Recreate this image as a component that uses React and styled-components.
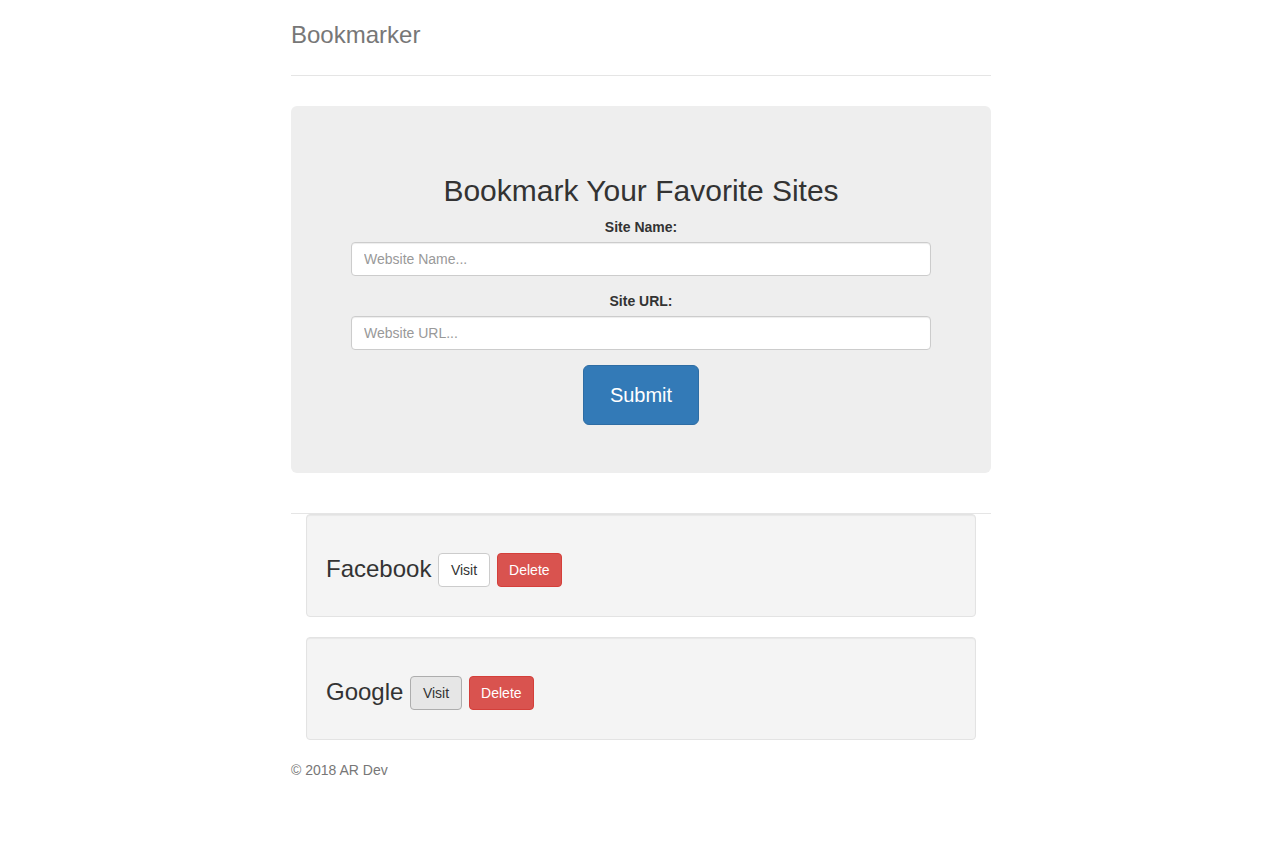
import React from 'react'
import styled, { createGlobalStyle } from 'styled-components'

const GlobalStyle = createGlobalStyle`
  body {
    margin: 0;
    background: #fff;
    font-family: "Liberation Sans", Arial, sans-serif;
    font-size: 14px;
    line-height: 1.42857;
    color: #333;
  }
  * { box-sizing: border-box; }
`

const bookmarks = [
    { name: 'Facebook', active: false },
    { name: 'Google', active: true },
]

export default function App() {
    return (
        <>
            <GlobalStyle />
            <Container>
                <Header>
                    <Brand>Bookmarker</Brand>
                </Header>
                <Jumbotron>
                    <Title>Bookmark Your Favorite Sites</Title>
                    <form onSubmit={e => e.preventDefault()}>
                        <FormGroup>
                            <Label>Site Name:</Label>
                            <Input type="text" placeholder="Website Name..." />
                        </FormGroup>
                        <FormGroup>
                            <Label>Site URL:</Label>
                            <Input type="text" placeholder="Website URL..." />
                        </FormGroup>
                        <SubmitButton type="submit">Submit</SubmitButton>
                    </form>
                </Jumbotron>
                <Results>
                    {bookmarks.map(b => (
                        <Well key={b.name}>
                            <SiteName>{b.name}</SiteName>
                            <Button active={b.active}>Visit</Button>
                            <Button variant="danger">Delete</Button>
                        </Well>
                    ))}
                </Results>
                <Footer>&copy; 2018 AR Dev</Footer>
            </Container>
        </>
    )
}

const Container = styled.div`
    width: 702px;
    margin: 0 auto;
    padding: 15px 0 0 2px;
`

const Header = styled.div`
    padding-bottom: 20px;
    border-bottom: 1px solid #e5e5e5;
    margin-bottom: 30px;
`

const Brand = styled.h3`
    margin: 0;
    font-size: 24px;
    font-weight: 500;
    line-height: 40px;
    color: #777;
`

const Jumbotron = styled.div`
    background: #eee;
    border-radius: 6px;
    padding: 48px 60px;
    text-align: center;
    margin-bottom: 40px;
`

const Title = styled.h2`
    margin: 20px 0 10px;
    font-size: 30px;
    font-weight: 500;
    line-height: 1.1;
    color: #333;
`

const FormGroup = styled.div`
    margin-bottom: 15px;
`

const Label = styled.label`
    display: block;
    margin-bottom: 5px;
    font-weight: 700;
    line-height: 20px;
`

const Input = styled.input`
    display: block;
    width: 100%;
    height: 34px;
    padding: 6px 12px;
    font-family: inherit;
    font-size: 14px;
    color: #555;
    background: #fff;
    border: 1px solid #ccc;
    border-radius: 4px;
    box-shadow: inset 0 1px 1px rgba(0, 0, 0, 0.075);

    &::placeholder {
        color: #999;
    }
`

const SubmitButton = styled.button`
    height: 60px;
    width: 116px;
    font-family: inherit;
    font-size: 20px;
    color: #fff;
    background: #337ab7;
    border: 1px solid #2e6da4;
    border-radius: 6px;
    cursor: pointer;
`

const Results = styled.div`
    border-top: 1px solid #e5e5e5;
    padding: 0 15px;
`

const Well = styled.div`
    display: flex;
    align-items: center;
    gap: 7px;
    height: 103px;
    padding: 19px 19px 10px;
    margin-bottom: 20px;
    background: #f4f4f4;
    border: 1px solid #e3e3e3;
    border-radius: 4px;
    box-shadow: inset 0 1px 1px rgba(0, 0, 0, 0.05);
`

const SiteName = styled.h3`
    margin: 0 0 2px;
    font-size: 24px;
    font-weight: 500;
    line-height: 1.1;
    color: #333;
`

const Button = styled.button`
    height: 34px;
    padding: 6px 11.5px;
    font-family: inherit;
    font-size: 14px;
    line-height: 20px;
    border-radius: 4px;
    cursor: pointer;
    color: ${({ variant }) => (variant === 'danger' ? '#fff' : '#333')};
    background: ${({ variant, active }) =>
        variant === 'danger' ? '#d9534f' : active ? '#e6e6e6' : '#fff'};
    border: 1px solid
        ${({ variant, active }) =>
            variant === 'danger' ? '#d43f3a' : active ? '#adadad' : '#ccc'};
`

const Footer = styled.footer`
    margin-top: 1px;
    color: #777;
    line-height: 20px;
`
